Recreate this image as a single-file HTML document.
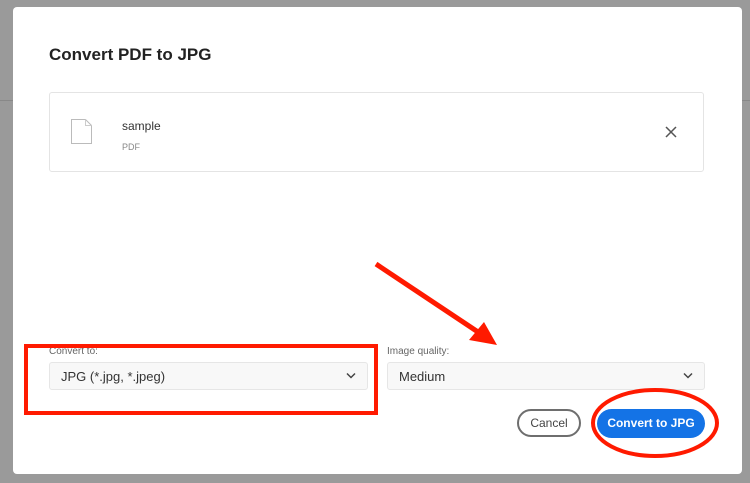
<!DOCTYPE html><html><head><style>
body{margin:0;width:750px;height:483px;background:#9a9a9a;position:relative;overflow:hidden;font-family:"Liberation Sans",sans-serif}
.m{position:absolute;left:13px;top:7px;width:729px;height:467px;background:#fff;border-radius:4px}
.a{position:absolute}
.sel{position:absolute;top:362px;height:28px;background:#f8f8f8;border:1px solid #e6e6e6;border-radius:3px;font-size:13px;color:#333;line-height:28px;padding-left:11px;box-sizing:border-box}
</style></head><body>
<div class="a" style="left:0;top:100px;width:13px;height:1px;background:#888"></div>
<div class="a" style="left:742px;top:100px;width:8px;height:1px;background:#888"></div>
<div class="m"></div>
<div class="a" style="left:49px;top:45px;font-size:17px;font-weight:bold;color:#222">Convert PDF to JPG</div>
<div class="a" style="left:49px;top:92px;width:655px;height:80px;border:1px solid #e4e4e4;border-radius:3px;box-sizing:border-box"></div>
<svg class="a" style="left:70px;top:118px" width="24" height="28"><path d="M1.5 1.5h14l6 6v18h-20z" fill="none" stroke="#bbb"/><path d="M15.5 1.5v6h6" fill="none" stroke="#ccc"/></svg>
<div class="a" style="left:122px;top:119px;font-size:12px;color:#333">sample</div>
<div class="a" style="left:122px;top:142px;font-size:9px;color:#888">PDF</div>
<svg class="a" style="left:665px;top:126px" width="12" height="12"><path d="M1 1L11 11M11 1L1 11" stroke="#555" stroke-width="1.5"/></svg>
<div class="a" style="left:49px;top:346px;font-size:10px;color:#666">Convert to:</div>
<div class="a" style="left:387px;top:346px;font-size:10px;color:#666">Image quality:</div>
<div class="sel" style="left:49px;width:319px">JPG (*.jpg, *.jpeg)</div>
<div class="sel" style="left:387px;width:318px">Medium</div>
<svg class="a" style="left:346px;top:372px" width="10" height="8"><path d="M1 1.5l4 4 4-4" fill="none" stroke="#444" stroke-width="1.5"/></svg>
<svg class="a" style="left:683px;top:372px" width="10" height="8"><path d="M1 1.5l4 4 4-4" fill="none" stroke="#444" stroke-width="1.5"/></svg>
<div class="a" style="left:517px;top:409px;width:64px;height:28px;border:2px solid #6e6e6e;border-radius:15px;box-sizing:border-box;font-size:12px;color:#444;text-align:center;line-height:24px">Cancel</div>
<div class="a" style="left:597px;top:409px;width:108px;height:29px;background:#1473e6;border-radius:15px;font-size:12px;font-weight:bold;color:#fff;text-align:center;line-height:29px">Convert to JPG</div>
<svg class="a" style="left:0;top:0" width="750" height="483">
<rect x="26" y="346" width="350" height="67" fill="none" stroke="#ff1a00" stroke-width="4"/>
<ellipse cx="655" cy="423" rx="62" ry="33" fill="none" stroke="#ff1a00" stroke-width="4"/>
<path d="M376 264L478 332" stroke="#ff1a00" stroke-width="5"/>
<path d="M497 345L469 340L484 322Z" fill="#ff1a00"/>
</svg>
</body></html>
